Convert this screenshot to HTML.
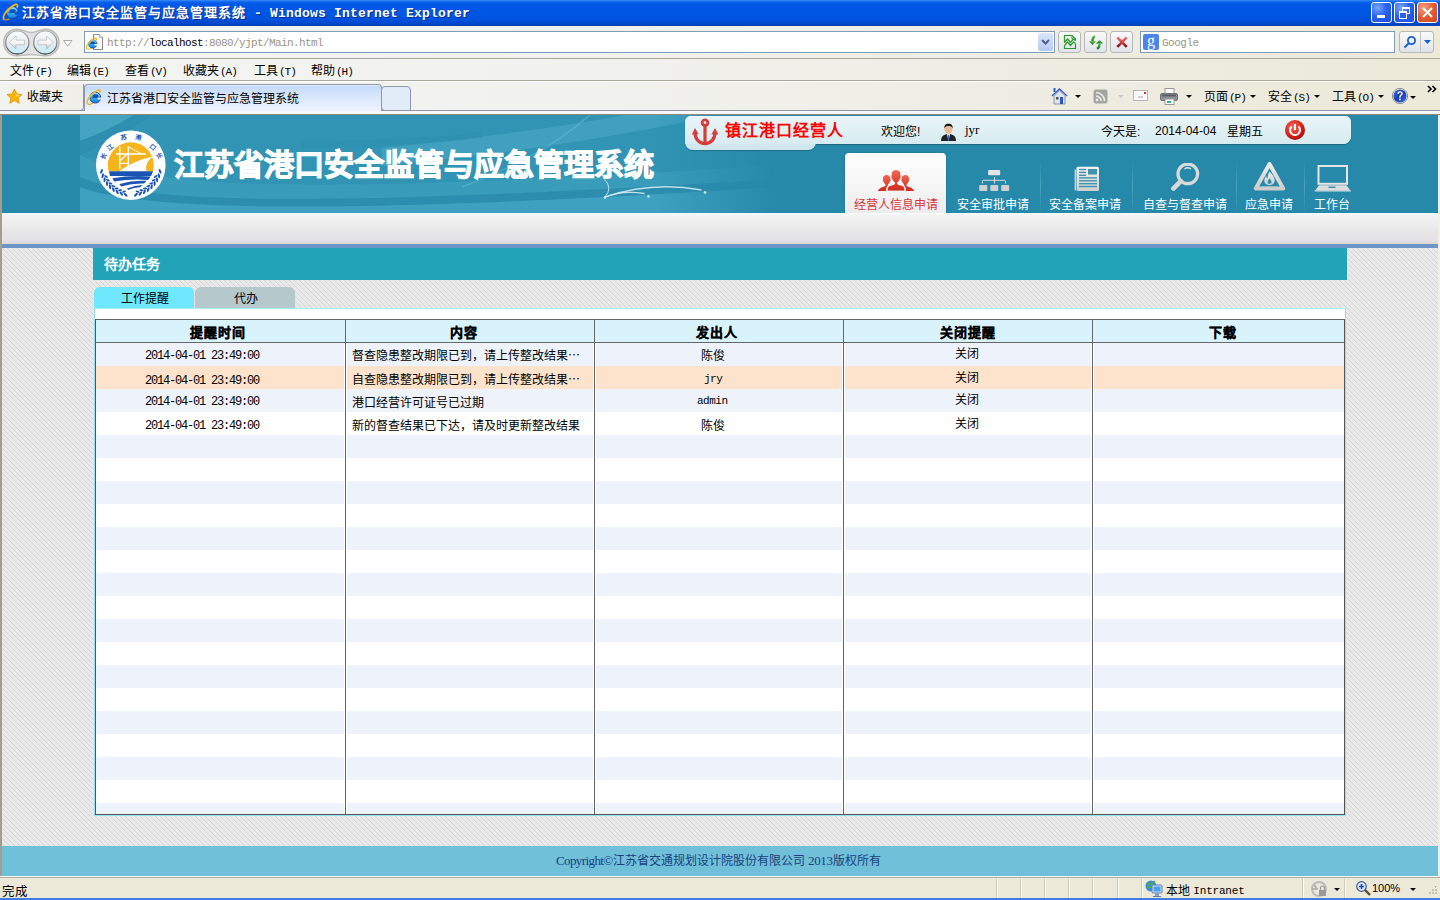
<!DOCTYPE html>
<html lang="zh-CN"><head><meta charset="utf-8">
<style>
*{margin:0;padding:0;box-sizing:border-box}
html,body{width:1440px;height:900px;overflow:hidden;background:#ece9d8;font-family:"Liberation Sans",sans-serif;font-size:12px;color:#000}
.a{position:absolute}
.nw{white-space:nowrap}
#title{left:0;top:0;width:1440px;height:26px;background:linear-gradient(#3a8cf6 0,#0b63ec 2px,#0058e6 4px,#0056e4 14px,#0050dc 20px,#0047c9 24px,#0a3fb0 26px)}
#title .t{left:22px;top:2px;color:#fff;font-weight:bold;font-size:13px;text-shadow:1px 1px 0 #0a2a8a}
.wbtn{top:2px;width:21px;height:21px;border:1px solid #fff;border-radius:3px;background:radial-gradient(circle at 30% 25%,#7aa8ff 0,#2a62ee 45%,#1d4fe0 100%)}
.chrome{background:linear-gradient(90deg,#f4f4f2 0,#f1f1ee 600px,#ece9d8 1440px)}
#addr{left:0;top:26px;width:1440px;height:32px}
#menu{left:0;top:58px;width:1440px;height:23px;border-top:1px solid #a9a797;border-bottom:1px solid #a9a797}
#favs{left:0;top:81px;width:1440px;height:33px;border-top:1px solid #fff}
.ibox{background:#fff;border:1px solid #7f9db9}
.tbtn{top:31px;width:23px;height:22px;border:1px solid #b7b7b7;border-radius:3px;background:linear-gradient(#fafafa 0,#eceef2 50%,#dfe3ea 100%)}
.menuitem{top:61px;font-size:12px}
.pm{font-family:"Liberation Mono",monospace;font-size:11px;margin-left:1px;letter-spacing:-1px}
.tb{top:87px;font-size:12px}
.arr{width:0;height:0;border-left:3px solid transparent;border-right:3px solid transparent;border-top:3px solid #000}
#page{left:0;top:114px;width:1440px;height:764px;background:linear-gradient(90deg,#a19e8f 0,#a19e8f 2px,#f1efe6 2px)}
#banner{left:2px;top:115px;width:1436px;height:98px;background:#2689aa;overflow:hidden}
#graybar{left:2px;top:213px;width:1436px;height:31px;background:linear-gradient(#fff 0,#f3f3f3 2px,#ececec 12px,#e4e4e4 22px,#e4e2e8 27px,#ddd7d6 30px)}
#blueline{left:2px;top:244px;width:1436px;height:4px;background:linear-gradient(#7097c9,#6b93c6)}
#body{left:2px;top:248px;width:1436px;height:598px}
#footer{left:2px;top:846px;width:1436px;height:30px;background:#6fc0d8;color:#1a4080;font-size:12px}
#status{left:0;top:876px;width:1440px;height:24px;background:#ece9d8;border-top:1px solid #fff}
.ph{left:93px;top:248px;width:1254px;height:32px;background:#22a3b8;color:#fff;font-weight:bold;font-size:14px}
.tab{top:287px;height:22px;border-radius:6px 6px 0 0;font-size:12px;text-align:center;line-height:24px;padding-left:2px}
.hd{font-weight:bold;font-size:13px;letter-spacing:1px;-webkit-text-stroke:.3px #000}
.dt{font-family:"Liberation Mono",monospace;font-size:12px;letter-spacing:-1.2px}
.mo{font-family:"Liberation Mono",monospace;font-size:11px;letter-spacing:-0.5px}
</style></head><body>
<svg width="0" height="0" style="position:absolute"><defs>
<linearGradient id="ieg" x1="0" y1="0" x2="0" y2="1"><stop offset="0" stop-color="#9ae6ff"/><stop offset=".5" stop-color="#37b0f0"/><stop offset="1" stop-color="#1878d8"/></linearGradient>
<mask id="iem"><rect width="24" height="24" fill="#fff"/><rect x="14.8" y="12.6" width="5" height="2.2" fill="#000"/></mask>
<symbol id="ie" viewBox="0 0 24 24">
 <g mask="url(#iem)"><circle cx="12.3" cy="12.6" r="6" fill="url(#ieg)" stroke="#0b3f96" stroke-width=".9"/>
 <ellipse cx="12.6" cy="10.6" rx="3.2" ry="1.6" fill="#0a52d0"/>
 <rect x="8.6" y="11.7" width="9.4" height="1.1" fill="#0b3f96"/></g>
 <path d="M4.2 19.6C1.8 17.8 5 11.5 10.5 7.5S17 3.8 17.5 5.2c.4 1-.3 1.9-.8 2.4" fill="none" stroke="#f6b81a" stroke-width="1.7"/>
 <path d="M4.2 19.6c1.2.8 3.5.2 5.5-.8" fill="none" stroke="#e6a010" stroke-width="1.2"/>
</symbol></defs></svg>
<!-- title bar -->
<div id="title" class="a">
 <svg class="a" style="left:0;top:0" width="24" height="24"><use href="#ie"/></svg>
 <div class="t a nw"><span style="letter-spacing:1px">江苏省港口安全监管与应急管理系统</span><span style="font-family:'Liberation Mono',monospace;letter-spacing:0.2px"> - Windows Internet Explorer</span></div>
 <div class="wbtn a" style="left:1371px"><div class="a" style="left:5px;top:12px;width:8px;height:3px;background:#fff"></div></div>
 <div class="wbtn a" style="left:1394px"><div class="a" style="left:7px;top:4px;width:8px;height:7px;border:1px solid #fff;border-top-width:2px"></div><div class="a" style="left:4px;top:8px;width:8px;height:8px;border:1px solid #fff;border-top-width:2px;background:#2a62ee"></div></div>
 <div class="wbtn a" style="left:1417px;background:radial-gradient(circle at 30% 25%,#f7a081 0,#e25c34 50%,#d0471e 100%)">
  <svg class="a" style="left:4px;top:4px" width="11" height="11"><path d="M1 1L10 10M10 1L1 10" stroke="#fff" stroke-width="2"/></svg>
 </div>
</div>
<!-- address row -->
<div id="addr" class="a chrome">
 <svg class="a" style="left:3px;top:2px" width="58" height="30" viewBox="0 0 58 30">
  <defs><linearGradient id="bg1" x1="0" y1="0" x2="0" y2="1"><stop offset="0" stop-color="#fdfdfd"/><stop offset="0.45" stop-color="#e8ecef"/><stop offset="1" stop-color="#c2ecfb"/></linearGradient>
  <linearGradient id="bst" x1="0" y1="0" x2="0" y2="1"><stop offset="0" stop-color="#b4b4b4"/><stop offset="0.6" stop-color="#8a8a8a"/><stop offset="1" stop-color="#4a4a4a"/></linearGradient>
  <linearGradient id="arw" x1="0" y1="0" x2="0" y2="1"><stop offset="0" stop-color="#fff"/><stop offset=".55" stop-color="#f4f4f4"/><stop offset="1" stop-color="#bdbdbd"/></linearGradient></defs>
  <path d="M14 1.2C20 1.2 23 4.5 28.3 4.5S36.5 1.2 42.5 1.2C50 1.2 56 7 56 14.5S50 27.8 42.5 27.8C36.5 27.8 34 26.5 28.3 26.5S20 27.8 14 27.8C6.5 27.8 .8 22 .8 14.5S6.5 1.2 14 1.2z" fill="#e2e2e2" stroke="#bcbcbc" stroke-width="1.4"/>
  <circle cx="14.3" cy="14.4" r="11.6" fill="url(#bg1)" stroke="url(#bst)" stroke-width="1.3"/>
  <circle cx="42.3" cy="14.4" r="11.6" fill="url(#bg1)" stroke="url(#bst)" stroke-width="1.3"/>
  <path d="M6.5 14.5L13 8v4.2h8.5v4.6H13V21z" fill="url(#arw)" stroke="#b0b0b0" stroke-width=".6"/>
  <path d="M50.1 14.5L43.6 8v4.2h-8.5v4.6h8.5V21z" fill="url(#arw)" stroke="#b0b0b0" stroke-width=".6"/>
 </svg>
 <svg class="a" style="left:63px;top:14px" width="10" height="7"><path d="M0.5 .5h8.5l-4.25 5.5z" fill="#fff" stroke="#aaa"/></svg>
 <div class="a ibox" style="left:84px;top:5px;width:971px;height:22px">
  <svg class="a" style="left:2px;top:1px" width="18" height="18" viewBox="0 0 18 18"><path d="M6.5 1.5h6l3 3v12h-9z" fill="#fafafa" stroke="#8a8a8a"/><path d="M12.5 1.5v3h3" fill="#fff" stroke="#aaa" stroke-width=".8"/></svg><svg class="a" style="left:-1px;top:3px" width="17" height="17"><use href="#ie"/></svg>
  <div class="a nw" style="left:22px;top:5px;font-family:'Liberation Mono',monospace;font-size:11px;color:#9a9584;letter-spacing:-0.6px">http://<span style="color:#000">localhost</span>:8080/yjpt/Main.html</div>
  <div class="a" style="left:953px;top:1px;width:15px;height:18px;border-radius:2px;background:linear-gradient(#dbe5fb,#b5c9f2)"><svg class="a" style="left:3px;top:6px" width="9" height="6"><path d="M1 1l3.5 3.5L8 1" fill="none" stroke="#4d6185" stroke-width="2"/></svg></div>
 </div>
 <div class="a tbtn" style="left:1058px;top:5px"><svg class="a" style="left:3px;top:2px" width="16" height="16"><g fill="none" stroke="#2a9a2a" stroke-width="1.2"><path d="M2.5 8.5V1.5H10L13.5 5V6.5"/><path d="M10 1.5V5h3.5" stroke-width=".9"/><path d="M2.5 11.5V14.5H13.5V9.5"/><path d="M2.5 8.5L5.5 5 8.5 8.5 11.5 5 13.5 6.5M2.5 11.5L5.5 8 8.5 11.5 11.5 8 13.5 9.5"/></g></svg></div>
 <div class="a tbtn" style="left:1084px;top:5px"><svg class="a" style="left:3px;top:3px" width="17" height="16"><defs><linearGradient id="gr" x1="0" y1="0" x2="0" y2="1"><stop offset="0" stop-color="#5ab84a"/><stop offset="1" stop-color="#1a7a1a"/></linearGradient></defs><path d="M7 1.2C5.2 2 4.3 4 4.4 6.5" fill="none" stroke="url(#gr)" stroke-width="2.2"/><path d="M.8 6.2H8.2L4.4 10z" fill="url(#gr)"/><path d="M7.8 8.6H15.2L11.6 5z" fill="url(#gr)"/><path d="M11.5 8.4C11.8 11 11 12.8 9 13.8" fill="none" stroke="url(#gr)" stroke-width="2.2"/></svg></div>
 <div class="a tbtn" style="left:1110px;top:5px"><svg class="a" style="left:5px;top:3px" width="13" height="14"><defs><linearGradient id="rx" x1="0" y1="0" x2="0" y2="1"><stop offset="0" stop-color="#f07070"/><stop offset=".5" stop-color="#d04848"/><stop offset="1" stop-color="#800a0a"/></linearGradient></defs><path d="M1.3 2.3L10.7 11.8M10.7 2.3L1.3 11.8" stroke="url(#rx)" stroke-width="2.6"/></svg></div>
 <div class="a ibox" style="left:1140px;top:5px;width:255px;height:22px">
  <div class="a" style="left:2px;top:2px;width:16px;height:16px;border-radius:2px;background:#4a86e8;color:#fff;font-family:'Liberation Serif',serif;font-size:16px;line-height:13px;text-align:center">g</div>
  <div class="a nw" style="left:21px;top:5px;font-family:'Liberation Mono',monospace;font-size:11px;color:#9a9584;letter-spacing:-0.5px">Google</div>
 </div>
 <div class="a" style="left:1399px;top:5px;width:35px;height:22px;border:1px solid #b9b9b9;border-radius:3px;background:linear-gradient(#fafafa 0,#eceef2 50%,#dfe3ea 100%)">
  <div class="a" style="left:20px;top:0;width:1px;height:20px;background:#c0c0c0"></div>
  <svg class="a" style="left:3px;top:3px" width="14" height="14"><circle cx="8.5" cy="5.5" r="3.6" fill="none" stroke="#1c5fd0" stroke-width="1.8"/><path d="M6 8L1.5 12.5" stroke="#1c5fd0" stroke-width="2"/></svg>
  <svg class="a" style="left:24px;top:8px" width="8" height="5"><path d="M0 0h7L3.5 4z" fill="#1c5fd0"/></svg>
 </div>
</div>
<!-- menu -->
<div id="menu" class="a chrome"></div>
<div class="a menuitem nw" style="left:10px">文件<span class="pm">(F)</span></div>
<div class="a menuitem nw" style="left:67px">编辑<span class="pm">(E)</span></div>
<div class="a menuitem nw" style="left:125px">查看<span class="pm">(V)</span></div>
<div class="a menuitem nw" style="left:183px">收藏夹<span class="pm">(A)</span></div>
<div class="a menuitem nw" style="left:254px">工具<span class="pm">(T)</span></div>
<div class="a menuitem nw" style="left:311px">帮助<span class="pm">(H)</span></div>
<!-- favorites/tab bar -->
<div id="favs" class="a chrome"></div>
<div class="a" style="left:0;top:110px;width:1440px;height:1px;background:#8f97ad"></div>
<div class="a" style="left:0;top:111px;width:1440px;height:3px;background:#f7f7fb"></div>
<div class="a" style="left:-5px;top:84px;width:89px;height:27px;border:1px solid #8f97ad;border-top:none;border-left:none;border-radius:0 0 4px 0;background:linear-gradient(90deg,#f3f3f1,#efeee8)"></div>
<svg class="a" style="left:6px;top:88px" width="17" height="17" viewBox="0 0 17 17"><path d="M8.5 1l2.3 4.9 5.2.6-3.9 3.6 1.1 5.2-4.7-2.7-4.7 2.7 1.1-5.2L1 6.5l5.2-.6z" fill="#f7b500" stroke="#e09000" stroke-width=".8"/><path d="M8.5 3l1.5 3.6 3.5.5-3 2" fill="#ffe780"/></svg>
<div class="a tb nw" style="left:27px">收藏夹</div>
<div class="a" style="left:84px;top:84px;width:298px;height:27px;border:1px solid #8f97ad;border-bottom:none;border-radius:4px 4px 0 0;background:linear-gradient(#fff 0,#c3dafb 1px,#d6e5fb 10px,#eef3fc 26px)"></div>
<svg class="a" style="left:84px;top:86px" width="22" height="22"><use href="#ie"/></svg>
<div class="a nw" style="left:107px;top:89px">江苏省港口安全监管与应急管理系统</div>
<div class="a" style="left:381px;top:86px;width:30px;height:25px;border:1px solid #8f97ad;border-radius:4px 4px 0 4px;background:#e2ebf8"></div>
<!-- right toolbar -->
<svg class="a" style="left:1050px;top:87px" width="19" height="18" viewBox="0 0 19 18"><path d="M2 9L9.5 2 17 9" fill="none" stroke="#3a5fc8" stroke-width="1.5"/><path d="M4 8.5v8.5h11V8.5L9.5 3.5z" fill="#dfe4ea" stroke="#8a96a8"/><rect x="10" y="10" width="3" height="7" fill="#2a58b8"/><rect x="6" y="10" width="2.5" height="2.5" fill="#555"/><rect x="3.5" y="1" width="2" height="4" fill="#3a5fc8"/></svg>
<div class="a arr" style="left:1075px;top:95px"></div>
<svg class="a" style="left:1093px;top:89px" width="15" height="15"><rect x=".5" y=".5" width="14" height="14" rx="2.5" fill="#a5a5a0"/><circle cx="4" cy="11" r="1.4" fill="#eee"/><path d="M3 7a5 5 0 0 1 5 5M3 3.5a8.5 8.5 0 0 1 8.5 8.5" fill="none" stroke="#eee" stroke-width="1.6"/></svg>
<div class="a arr" style="left:1118px;top:95px;border-top-color:#c8c8c8"></div>
<svg class="a" style="left:1133px;top:90px" width="16" height="12"><rect x=".5" y=".5" width="14" height="10" fill="#f8f8f8" stroke="#b5b5b5"/><path d="M5 7h5" stroke="#aaa"/><rect x="11" y="2" width="2" height="2" fill="#e03030"/></svg>
<svg class="a" style="left:1160px;top:88px" width="19" height="17"><rect x="5" y=".5" width="9" height="6" fill="#fff" stroke="#999"/><rect x=".5" y="5.5" width="17" height="7" rx="1.5" fill="#8d9098" stroke="#6e7178"/><rect x="2" y="6.5" width="14" height="2" fill="#5a5d63"/><rect x="5" y="11" width="9" height="5.5" fill="#fff" stroke="#999"/><rect x="7" y="13" width="4" height="2" fill="#3a9"/></svg>
<div class="a arr" style="left:1186px;top:95px"></div>
<div class="a tb nw" style="left:1204px">页面<span class="pm">(P)</span></div><div class="a arr" style="left:1250px;top:95px"></div>
<div class="a tb nw" style="left:1268px">安全<span class="pm">(S)</span></div><div class="a arr" style="left:1314px;top:95px"></div>
<div class="a tb nw" style="left:1332px">工具<span class="pm">(O)</span></div><div class="a arr" style="left:1378px;top:95px"></div>
<svg class="a" style="left:1391px;top:87px" width="18" height="18" viewBox="0 0 18 18"><defs><linearGradient id="hg" x1="0" y1="0" x2="1" y2="1"><stop offset="0" stop-color="#3a6ee0"/><stop offset=".5" stop-color="#1a3ea8"/><stop offset="1" stop-color="#3a6ae8"/></linearGradient></defs><circle cx="9" cy="9" r="7.6" fill="#fff" stroke="#8a8a8a" stroke-width="1"/><circle cx="9" cy="9" r="6.6" fill="url(#hg)"/><path d="M6.3 6.8C6.3 5 7.5 4.2 9.1 4.2S11.8 5.1 11.8 6.6c0 1.6-2 2-2.2 3.5v.6H8.2v-.8c.1-1.8 2-2.2 2-3.3 0-.7-.5-1-1.1-1-.7 0-1.1.4-1.1 1.2z" fill="#fff"/><rect x="8.1" y="11.6" width="1.6" height="1.6" fill="#fff"/></svg>
<div class="a arr" style="left:1410px;top:96px"></div>
<svg class="a" style="left:1427px;top:85px" width="11" height="8"><path d="M1 1l3 3-3 3M5.5 1l3 3-3 3" fill="none" stroke="#000" stroke-width="1.6"/></svg>

<!-- page -->
<div id="page" class="a"></div>
<div class="a" style="left:0;top:114px;width:1440px;height:1px;background:#8d897b"></div>
<div id="banner" class="a">
 <svg class="a" style="left:0;top:0" width="1436" height="98" viewBox="0 0 1436 98">
  <defs>
   <linearGradient id="fadeR" x1="0" y1="0" x2="1" y2="0"><stop offset="0" stop-color="#fff"/><stop offset=".82" stop-color="#fff"/><stop offset="1" stop-color="#000"/></linearGradient>
   <mask id="bmask"><rect x="78" y="0" width="700" height="98" fill="url(#fadeR)"/></mask>
  </defs>
  <g mask="url(#bmask)">
   <rect x="78" y="0" width="700" height="98" fill="#3194b4"/>
   <path d="M78 0H132C112 12 95 20 78 26z" fill="#45a4c2"/>
   <path d="M78 26C95 20 112 12 132 0H150C120 20 100 30 78 40z" fill="#2e8fb0"/>
   <path d="M78 40C150 75 320 80 778 50V64C330 92 140 90 78 62z" fill="#3a9cbb"/>
   <path d="M78 62C140 90 330 92 778 64V72C330 100 140 96 78 72z" fill="#2d8daf"/>
   <path d="M78 72C140 96 330 100 778 72V98H78z" fill="#3fa1c0"/>
   <path d="M460 72C520 50 560 25 590 -2" fill="none" stroke="#7ccbe2" stroke-opacity=".35" stroke-width="1.5"/>
   <path d="M380 42C480 32 600 16 700 -6" fill="none" stroke="#6cc2dc" stroke-opacity=".28" stroke-width="18"/>
   <path d="M300 30C380 28 430 26 480 20" fill="none" stroke="#2c8aab" stroke-opacity=".3" stroke-width="6"/>
  </g>
  <g fill="none" stroke="#d8eef5" stroke-opacity=".85">
   <path d="M603 82Q611 73 602.5 64.5" stroke-width="1"/>
   <path d="M603 82Q620 75 642.5 78.5" stroke-width="1.3"/>
   <path d="M603 82Q650 66 699.5 75" stroke-width="1.3"/>
  </g>
  <g fill="#d8eef5" fill-opacity=".85"><circle cx="603" cy="82.4" r="1.3"/><circle cx="646.5" cy="81.4" r="1.3"/><circle cx="703" cy="77.4" r="1.3"/></g>
 </svg>
 <svg class="a" style="left:93px;top:15px" width="72" height="72" viewBox="0 0 72 72">
  <defs><clipPath id="sunclip"><rect x="0" y="0" width="72" height="41.3"/></clipPath></defs>
  <circle cx="35.8" cy="35.2" r="34.8" fill="#fff"/>
  <circle cx="35.8" cy="35.2" r="23" fill="#f5b41c" clip-path="url(#sunclip)"/>
  <g stroke="#fff" stroke-width="1.3" fill="none"><path d="M24.8 16.8V39M33.3 16.8V39M21 24H51M24.8 33.3H33.3M24.8 31L33.3 23"/><path d="M33.3 16.8L47 24" stroke-width=".9"/></g>
  <path d="M24 41.3Q40 30 58 26.5Q49 33 51.5 41.3z" fill="#fff"/>
  <path d="M14 41.3H58Q57 44 56 46H15Q14.5 44 14 41.3z" fill="#1a55b5"/>
  <path d="M17.5 48.2Q36 45 55.5 46.5Q54.5 48.5 53 50Q36 48.5 19 51.5z" fill="#1a55b5"/>
  <path d="M24.5 54Q38 50 51.5 50.8Q50.5 52.5 49 53.5Q38 53 26 56.5z" fill="#1a55b5"/>
  <path d="M32 58.5Q40 55 47.8 55Q46.5 56.6 45 57.2Q39 57.5 33 60z" fill="#1a55b5"/>
  <g fill="#1a55b5"><ellipse cx="6.5" cy="41.4" rx="2.5" ry="1.1" transform="rotate(293 6.5 41.4)"/><ellipse cx="7.7" cy="45.7" rx="2.5" ry="1.1" transform="rotate(284 7.7 45.7)"/><ellipse cx="11.0" cy="46.5" rx="2.1" ry=".95" transform="rotate(214 11.0 46.5)"/><ellipse cx="9.6" cy="49.7" rx="2.5" ry="1.1" transform="rotate(276 9.6 49.7)"/><ellipse cx="12.9" cy="50.1" rx="2.1" ry=".95" transform="rotate(206 12.9 50.1)"/><ellipse cx="12.0" cy="53.5" rx="2.5" ry="1.1" transform="rotate(268 12.0 53.5)"/><ellipse cx="15.4" cy="53.3" rx="2.1" ry=".95" transform="rotate(198 15.4 53.3)"/><ellipse cx="15.0" cy="56.8" rx="2.5" ry="1.1" transform="rotate(259 15.0 56.8)"/><ellipse cx="18.3" cy="56.1" rx="2.1" ry=".95" transform="rotate(189 18.3 56.1)"/><ellipse cx="18.4" cy="59.6" rx="2.5" ry="1.1" transform="rotate(250 18.4 59.6)"/><ellipse cx="21.5" cy="58.5" rx="2.1" ry=".95" transform="rotate(180 21.5 58.5)"/><ellipse cx="22.2" cy="61.9" rx="2.5" ry="1.1" transform="rotate(242 22.2 61.9)"/><ellipse cx="25.1" cy="60.3" rx="2.1" ry=".95" transform="rotate(172 25.1 60.3)"/><ellipse cx="26.3" cy="63.6" rx="2.5" ry="1.1" transform="rotate(234 26.3 63.6)"/><ellipse cx="29.0" cy="61.6" rx="2.1" ry=".95" transform="rotate(164 29.0 61.6)"/><ellipse cx="30.6" cy="64.7" rx="2.5" ry="1.1" transform="rotate(225 30.6 64.7)"/><ellipse cx="65.1" cy="41.4" rx="2.5" ry="1.1" transform="rotate(-113 65.1 41.4)"/><ellipse cx="63.9" cy="45.7" rx="2.5" ry="1.1" transform="rotate(-104 63.9 45.7)"/><ellipse cx="60.6" cy="46.5" rx="2.1" ry=".95" transform="rotate(-34 60.6 46.5)"/><ellipse cx="62.0" cy="49.7" rx="2.5" ry="1.1" transform="rotate(-96 62.0 49.7)"/><ellipse cx="58.7" cy="50.1" rx="2.1" ry=".95" transform="rotate(-26 58.7 50.1)"/><ellipse cx="59.6" cy="53.5" rx="2.5" ry="1.1" transform="rotate(-88 59.6 53.5)"/><ellipse cx="56.2" cy="53.3" rx="2.1" ry=".95" transform="rotate(-18 56.2 53.3)"/><ellipse cx="56.6" cy="56.8" rx="2.5" ry="1.1" transform="rotate(-79 56.6 56.8)"/><ellipse cx="53.3" cy="56.1" rx="2.1" ry=".95" transform="rotate(-9 53.3 56.1)"/><ellipse cx="53.2" cy="59.6" rx="2.5" ry="1.1" transform="rotate(-70 53.2 59.6)"/><ellipse cx="50.1" cy="58.5" rx="2.1" ry=".95" transform="rotate(-0 50.1 58.5)"/><ellipse cx="49.4" cy="61.9" rx="2.5" ry="1.1" transform="rotate(-62 49.4 61.9)"/><ellipse cx="46.5" cy="60.3" rx="2.1" ry=".95" transform="rotate(8 46.5 60.3)"/><ellipse cx="45.3" cy="63.6" rx="2.5" ry="1.1" transform="rotate(-54 45.3 63.6)"/><ellipse cx="42.6" cy="61.6" rx="2.1" ry=".95" transform="rotate(16 42.6 61.6)"/><ellipse cx="41.0" cy="64.7" rx="2.5" ry="1.1" transform="rotate(-45 41.0 64.7)"/></g>
  <g font-size="6.2" font-weight="bold" fill="#1a55b5" font-family="Liberation Sans"><text x="8" y="28.2" transform="rotate(-62 8 25.7)" text-anchor="middle">长</text><text x="15" y="19.3" transform="rotate(-38 15 16.8)" text-anchor="middle">江</text><text x="28.2" y="10.0" transform="rotate(-10 28.2 7.5)" text-anchor="middle">苏</text><text x="43.4" y="10.0" transform="rotate(10 43.4 7.5)" text-anchor="middle">港</text><text x="57.8" y="19.3" transform="rotate(38 57.8 16.8)" text-anchor="middle">口</text><text x="64.5" y="28.2" transform="rotate(62 64.5 25.7)" text-anchor="middle">长</text></g>
 </svg>
 <div class="a nw" style="left:172px;top:33px;color:#fff;font-weight:bold;font-size:30px;letter-spacing:0px;line-height:34px;-webkit-text-stroke:1.2px #fff">江苏省港口安全监管与应急管理系统</div>
 <!-- user bar -->
 <div class="a" style="left:683px;top:1px;width:666px;height:28px;border-radius:6px 6px 8px 0;background:linear-gradient(#e9f5f8,#d5eaf0);box-shadow:0 1px 1px rgba(0,0,0,.25)"></div>
 <div class="a" style="left:683px;top:20px;width:131px;height:15px;border-radius:0 0 8px 8px;background:linear-gradient(#d9ecf1,#cfe5eb);box-shadow:0 1px 1px rgba(0,0,0,.2)"></div>
 <div class="a" style="left:683px;top:1px;width:666px;height:28px;border-radius:6px 6px 8px 0;background:linear-gradient(#e9f5f8,#d6ebf0)"></div>
 <svg class="a" style="left:690px;top:3px" width="28" height="28" viewBox="0 0 28 28">
  <circle cx="13" cy="4.8" r="4.3" fill="#d63c3c"/><circle cx="13" cy="4.6" r="1.4" fill="#e6f3f7"/>
  <rect x="11.4" y="8" width="3.2" height="17.5" fill="#d63c3c"/>
  <path d="M3 14.5C3 21.5 7.5 25.6 13 25.6S23 21.5 23 14.5" fill="none" stroke="#d63c3c" stroke-width="3.2"/>
  <path d="M-.3 16.5L3 10l3.6 6.2z M19.4 16.5L23 10l3.3 6.5z" fill="#d63c3c"/>
 </svg>
 <div class="a nw" style="left:723px;top:2px;color:#f00;font-weight:bold;font-size:16px;letter-spacing:1px;font-family:'Liberation Serif',serif">镇江港口经营人</div>
 <div class="a nw" style="left:879px;top:7px;font-size:12px">欢迎您!</div>
 <svg class="a" style="left:938px;top:8px" width="17" height="18" viewBox="0 0 17 18">
  <path d="M1 18c0-5 3-7 7.5-7S16 13 16 18z" fill="#222"/>
  <path d="M7 11l1.5 7 1.5-7z" fill="#fff"/><path d="M8 12h1l.3 5-.8 1-.8-1z" fill="#2a6ad0"/>
  <ellipse cx="8.5" cy="6" rx="4" ry="4.8" fill="#e8b890"/>
  <path d="M4.3 5.5C4 2 6 .8 8.5.8S13 2 12.7 5.5C12 3.5 10.5 3 8.5 3S5 3.5 4.3 5.5z" fill="#1a1a1a"/>
 </svg>
 <div class="a nw" style="left:963px;top:7px;font-size:13px;font-family:'Liberation Serif',serif">jyr</div>
 <div class="a nw" style="left:1099px;top:7px;font-size:12px">今天是:</div>
 <div class="a nw" style="left:1153px;top:9px;font-size:12px">2014-04-04</div>
 <div class="a nw" style="left:1225px;top:7px;font-size:12px">星期五</div>
 <svg class="a" style="left:1282px;top:4px" width="22" height="22" viewBox="0 0 22 22">
  <defs><radialGradient id="pw" cx="40%" cy="35%" r="65%"><stop offset="0" stop-color="#ff6a5a"/><stop offset=".7" stop-color="#d8201a"/><stop offset="1" stop-color="#a81010"/></radialGradient></defs>
  <circle cx="11" cy="11" r="10" fill="url(#pw)"/>
  <path d="M7.5 7.5a5 5 0 1 0 7 0" fill="none" stroke="#fff" stroke-width="2"/>
  <path d="M11 5v6" stroke="#fff" stroke-width="2"/>
 </svg>
 <!-- nav -->
 <div class="a" style="left:843px;top:38px;width:101px;height:60px;border-radius:4px 4px 0 0;background:linear-gradient(#fff 0,#f6f6f6 30px,#ececec 60px);box-shadow:0 0 2px rgba(0,0,0,.3)"></div>
 <svg class="a" style="left:874px;top:54px" width="40" height="23" viewBox="0 0 40 23">
  <defs><linearGradient id="rd" x1="0" y1="0" x2="0" y2="1"><stop offset="0" stop-color="#f26652"/><stop offset="1" stop-color="#cf2a1e"/></linearGradient></defs>
  <g id="sp"><path d="M10.4 6C8.2 6 7.1 7.3 7.1 9.6c0 .9-.4 1.2-.2 2 .2.7.5.9.7 1.4.4 1.1 1 1.8 1.8 2.3v1.6c-1.2.6-2.5.8-3.6 1.3C4 19.1 2.3 20.6 1.8 22.1H10c0-2.6.5-4.2 1.5-5.4l.6-.6v-1c.8-.5 1.4-1.2 1.8-2.3.2-.5.5-.7.7-1.4.2-.8-.2-1.1-.2-2C14.4 7.3 12.6 6 10.4 6z" fill="url(#rd)"/></g>
  <use href="#sp" transform="translate(40,0) scale(-1,1)"/>
  <path d="M20 .7C17 .7 15.3 2.2 15.3 5.5c0 1.3-.6 1.6-.3 2.8.3 1 .8 1.2 1 2 .5 1.5 1.5 2.6 2.5 3.2V15c-1.5.8-3.5 1-5 1.7-1.6.8-2.4 2.8-2.4 5.4H29c0-2.6-.8-4.6-2.4-5.4-1.5-.7-3.5-.9-5-1.7v-1.5c1-.6 2-1.7 2.5-3.2.2-.8.7-1 1-2 .3-1.2-.3-1.5-.3-2.8C24.7 2.2 23 .7 20 .7z" fill="url(#rd)" stroke="#f6f6f6" stroke-width="1"/>
 </svg>
 <div class="a nw" style="left:852px;top:80px;color:#d8363a;font-size:12px">经营人信息申请</div>
 <svg class="a" style="left:977px;top:54px" width="33" height="23" viewBox="0 0 33 23">
  <rect x="9.1" y=".9" width="12.1" height="5.3" rx="1" fill="#e4e4e4"/>
  <path d="M15.5 8V14.5M3.5 14.5V12.3Q3.5 11.3 4.5 11.3H25.5Q26.5 11.3 26.5 12.3V14.5" stroke="#d8d8d8" stroke-width="1" fill="none"/>
  <rect x=".2" y="16.1" width="8.1" height="5.8" rx="1" fill="#d0d0d0"/><rect x="11.3" y="16.1" width="7.9" height="5.8" rx="1" fill="#d0d0d0"/><rect x="22.2" y="16.1" width="8" height="5.8" rx="1" fill="#d0d0d0"/>
 </svg>
 <div class="a nw" style="left:955px;top:80px;color:#fff;font-size:12px">安全审批申请</div>
 <div class="a" style="left:1038px;top:45px;width:1px;height:53px;background:linear-gradient(#2689aa,#4aa3c0 50%,#2689aa)"></div>
 <svg class="a" style="left:1072px;top:51px" width="26" height="26" viewBox="0 0 26 26">
  <defs><linearGradient id="pg" x1="0" y1="0" x2="0" y2="1"><stop offset="0" stop-color="#f2f2f2"/><stop offset="1" stop-color="#cfcfcf"/></linearGradient></defs>
  <rect x="2.5" y=".7" width="22.5" height="24.3" rx="1.5" fill="url(#pg)"/>
  <rect x=".6" y="3.5" width="1.4" height="21" fill="#d0d0d0"/>
  <g fill="#3d93ae"><rect x="5" y="2.8" width="7" height="1.4"/><rect x="5" y="5.7" width="7" height="1.4"/><rect x="5" y="8.6" width="7" height="1.4"/>
  <rect x="14" y="3" width="9" height="5.5"/>
  <rect x="5" y="11.2" width="18" height="1.4"/><rect x="5" y="14.1" width="18" height="1.4"/><rect x="5" y="17" width="18" height="1.4"/><rect x="5" y="19.8" width="18" height="1.4"/></g>
 </svg>
 <div class="a nw" style="left:1047px;top:80px;color:#fff;font-size:12px">安全备案申请</div>
 <div class="a" style="left:1130px;top:45px;width:1px;height:53px;background:linear-gradient(#2689aa,#4aa3c0 50%,#2689aa)"></div>
 <svg class="a" style="left:1169px;top:48px" width="32" height="30" viewBox="0 0 32 30">
  <circle cx="16.8" cy="10.9" r="9.8" fill="none" stroke="#dadada" stroke-width="3.2"/>
  <path d="M13.5 5.8Q16.8 3.8 20 5.8" stroke="#e0e0e0" stroke-width="1.4" fill="none"/>
  <path d="M9.8 18.2L2.5 25.5" stroke="#d8d8d8" stroke-width="4.6" stroke-linecap="round"/>
 </svg>
 <div class="a nw" style="left:1141px;top:80px;color:#fff;font-size:12px">自查与督查申请</div>
 <div class="a" style="left:1234px;top:45px;width:1px;height:53px;background:linear-gradient(#2689aa,#4aa3c0 50%,#2689aa)"></div>
 <svg class="a" style="left:1250px;top:46px" width="36" height="32" viewBox="0 0 36 32">
  <defs><linearGradient id="wg" x1="0" y1="0" x2="0" y2="1"><stop offset="0" stop-color="#ececec"/><stop offset="1" stop-color="#cdcdcd"/></linearGradient></defs>
  <path d="M17.5 3L3.8 27.4H31.2z" fill="none" stroke="url(#wg)" stroke-width="4" stroke-linejoin="round"/>
  <path d="M17.5 10.5c2.6 3 5.2 5.5 5.2 9 0 3-2.3 4.7-5.2 4.7s-5.2-1.7-5.2-4.7c0-2 1-3.5 2-4.6 0 1.5.6 2.4 1.4 2.7-.3-2.6.5-4.6 1.8-7.1z" fill="url(#wg)"/>
  <path d="M17.5 17.5c1 1.2 2 2.2 2 3.5 0 1.3-.9 2-2 2s-2-.7-2-2c0-1.2 1-2.2 2-3.5z" fill="#2f8cab"/>
  <rect x="9.5" y="25" width="16" height="1" fill="#9cc6d2" opacity=".7"/>
 </svg>
 <div class="a nw" style="left:1243px;top:80px;color:#fff;font-size:12px">应急申请</div>
 <div class="a" style="left:1302px;top:45px;width:1px;height:53px;background:linear-gradient(#2689aa,#4aa3c0 50%,#2689aa)"></div>
 <svg class="a" style="left:1312px;top:50px" width="38" height="28" viewBox="0 0 38 28">
  <rect x="4.5" y="1" width="28.5" height="17.8" fill="none" stroke="#e6e4e4" stroke-width="2"/>
  <path d="M5 20.2H32.5L37 26.6H.5z" fill="#dcdcdc"/>
  <rect x="14.5" y="21.6" width="7" height="1.4" fill="#3a90ac"/>
  <rect x=".5" y="25" width="36.5" height="1" fill="#aac9d3" opacity=".6"/>
 </svg>
 <div class="a nw" style="left:1312px;top:80px;color:#fff;font-size:12px">工作台</div>
</div>
<div id="graybar" class="a"></div>
<div id="blueline" class="a"></div>
<svg id="body" class="a" width="1436" height="598">
 <defs><pattern id="st" width="5" height="5" patternUnits="userSpaceOnUse"><rect width="5" height="5" fill="#e9e9e9"/><rect x="0" y="0" width="1" height="1" fill="#d5d5d5"/><rect x="1" y="1" width="1" height="1" fill="#d5d5d5"/><rect x="2" y="2" width="1" height="1" fill="#d5d5d5"/><rect x="3" y="3" width="1" height="1" fill="#d5d5d5"/><rect x="4" y="4" width="1" height="1" fill="#d5d5d5"/></pattern></defs>
 <rect width="1436" height="598" fill="url(#st)" shape-rendering="crispEdges"/>
</svg>
<!--TABLE-->
<div class="a ph"><div class="a nw" style="left:11px;top:5px">待办任务</div></div>
<div class="a tab nw" style="left:94px;width:100px;background:#6fe8fd">工作提醒</div>
<div class="a tab nw" style="left:195px;width:100px;background:#b5c8cc">代办</div>
<div class="a" style="left:94px;top:308px;width:1252px;height:508px;background:#fff;border:1px solid #8fe2f2;border-top:1px solid #a8ecf8"></div>
<div class="a" style="left:95px;top:319px;width:1250px;height:496px;border:1px solid #555;border-top:1px solid #666;overflow:hidden;background:#fff">
<div class="a" style="left:0;top:0;width:1248px;height:23px;background:#d9f3fc;border-bottom:1px solid #666"></div>
<div class="a nw hd" style="left:94px;top:2px">提醒时间</div>
<div class="a nw hd" style="left:354px;top:2px">内容</div>
<div class="a nw hd" style="left:600px;top:2px">发出人</div>
<div class="a nw hd" style="left:844px;top:2px">关闭提醒</div>
<div class="a nw hd" style="left:1113px;top:2px">下载</div>
<div class="a" style="left:0;top:23px;width:1248px;height:23px;background:#eef2fa"></div>
<div class="a" style="left:0;top:46px;width:1248px;height:23px;background:#fde3cb"></div>
<div class="a" style="left:0;top:69px;width:1248px;height:23px;background:#eef2fa"></div>
<div class="a" style="left:0;top:92px;width:1248px;height:23px;background:#ffffff"></div>
<div class="a" style="left:0;top:115px;width:1248px;height:23px;background:#eef2fa"></div>
<div class="a" style="left:0;top:138px;width:1248px;height:23px;background:#ffffff"></div>
<div class="a" style="left:0;top:161px;width:1248px;height:23px;background:#eef2fa"></div>
<div class="a" style="left:0;top:184px;width:1248px;height:23px;background:#ffffff"></div>
<div class="a" style="left:0;top:207px;width:1248px;height:23px;background:#eef2fa"></div>
<div class="a" style="left:0;top:230px;width:1248px;height:23px;background:#ffffff"></div>
<div class="a" style="left:0;top:253px;width:1248px;height:23px;background:#eef2fa"></div>
<div class="a" style="left:0;top:276px;width:1248px;height:23px;background:#ffffff"></div>
<div class="a" style="left:0;top:299px;width:1248px;height:23px;background:#eef2fa"></div>
<div class="a" style="left:0;top:322px;width:1248px;height:23px;background:#ffffff"></div>
<div class="a" style="left:0;top:345px;width:1248px;height:23px;background:#eef2fa"></div>
<div class="a" style="left:0;top:368px;width:1248px;height:23px;background:#ffffff"></div>
<div class="a" style="left:0;top:391px;width:1248px;height:23px;background:#eef2fa"></div>
<div class="a" style="left:0;top:414px;width:1248px;height:23px;background:#ffffff"></div>
<div class="a" style="left:0;top:437px;width:1248px;height:23px;background:#eef2fa"></div>
<div class="a" style="left:0;top:460px;width:1248px;height:23px;background:#ffffff"></div>
<div class="a" style="left:0;top:483px;width:1248px;height:23px;background:#eef2fa"></div>
<div class="a nw dt" style="left:49px;top:29px">2014-04-01 23:49:00</div>
<div class="a nw" style="left:256px;top:26px">督查隐患整改期限已到，请上传整改结果⋯</div>
<div class="a nw" style="left:605px;top:26px">陈俊</div>
<div class="a nw" style="left:859px;top:24px">关闭</div>
<div class="a nw dt" style="left:49px;top:54px">2014-04-01 23:49:00</div>
<div class="a nw" style="left:256px;top:50px">自查隐患整改期限已到，请上传整改结果⋯</div>
<div class="a nw mo" style="left:608px;top:53px">jry</div>
<div class="a nw" style="left:859px;top:48px">关闭</div>
<div class="a nw dt" style="left:49px;top:75px">2014-04-01 23:49:00</div>
<div class="a nw" style="left:256px;top:73px">港口经营许可证号已过期</div>
<div class="a nw mo" style="left:601px;top:75px">admin</div>
<div class="a nw" style="left:859px;top:70px">关闭</div>
<div class="a nw dt" style="left:49px;top:99px">2014-04-01 23:49:00</div>
<div class="a nw" style="left:256px;top:96px">新的督查结果已下达，请及时更新整改结果</div>
<div class="a nw" style="left:605px;top:96px">陈俊</div>
<div class="a nw" style="left:859px;top:94px">关闭</div>
<div class="a" style="left:248px;top:23px;width:3px;height:473px;border-left:1px solid #fff;border-right:1px solid #fff;background:#666"></div><div class="a" style="left:249px;top:0;width:1px;height:23px;background:#666"></div>
<div class="a" style="left:497px;top:23px;width:3px;height:473px;border-left:1px solid #fff;border-right:1px solid #fff;background:#666"></div><div class="a" style="left:498px;top:0;width:1px;height:23px;background:#666"></div>
<div class="a" style="left:746px;top:23px;width:3px;height:473px;border-left:1px solid #fff;border-right:1px solid #fff;background:#666"></div><div class="a" style="left:747px;top:0;width:1px;height:23px;background:#666"></div>
<div class="a" style="left:995px;top:23px;width:3px;height:473px;border-left:1px solid #fff;border-right:1px solid #fff;background:#666"></div><div class="a" style="left:996px;top:0;width:1px;height:23px;background:#666"></div>
</div>
<!--/TABLE-->
<div id="footer" class="a"><div class="a nw" style="left:554px;top:5px"><span style="font-family:'Liberation Serif',serif;font-size:13px;letter-spacing:-0.6px">Copyright©</span>江苏省交通规划设计院股份有限公司 <span style="font-family:'Liberation Serif',serif;font-size:13px;letter-spacing:-0.3px">2013</span>版权所有</div></div>
<div id="status" class="a"></div>
<div class="a" style="left:0;top:877px;width:1440px;height:1px;background:#b0ad9e"></div>
<div class="a" style="left:0;top:898px;width:1440px;height:2px;background:#3c7fe0"></div>
<div class="a nw" style="left:2px;top:881px;font-size:12.5px">完成</div>
<div class="a" style="left:996px;top:879px;width:2px;height:19px;border-left:1px solid #c9c6b6;border-right:1px solid #fff"></div>
<div class="a" style="left:1020px;top:879px;width:2px;height:19px;border-left:1px solid #c9c6b6;border-right:1px solid #fff"></div>
<div class="a" style="left:1044px;top:879px;width:2px;height:19px;border-left:1px solid #c9c6b6;border-right:1px solid #fff"></div>
<div class="a" style="left:1068px;top:879px;width:2px;height:19px;border-left:1px solid #c9c6b6;border-right:1px solid #fff"></div>
<div class="a" style="left:1092px;top:879px;width:2px;height:19px;border-left:1px solid #c9c6b6;border-right:1px solid #fff"></div>
<div class="a" style="left:1117px;top:879px;width:2px;height:19px;border-left:1px solid #c9c6b6;border-right:1px solid #fff"></div>
<div class="a" style="left:1141px;top:879px;width:2px;height:19px;border-left:1px solid #c9c6b6;border-right:1px solid #fff"></div>
<div class="a" style="left:1302px;top:879px;width:2px;height:19px;border-left:1px solid #c9c6b6;border-right:1px solid #fff"></div>
<div class="a" style="left:1344px;top:879px;width:2px;height:19px;border-left:1px solid #c9c6b6;border-right:1px solid #fff"></div>
<svg class="a" style="left:1145px;top:880px" width="18" height="18" viewBox="0 0 18 18">
 <circle cx="6" cy="6" r="5.5" fill="#3a8ae0"/><path d="M2 4c2-1 3 1 5 0s1-3 3-2M1.5 7c2 1 4-1 6 1" stroke="#4ab04a" stroke-width="1.8" fill="none"/>
 <rect x="7" y="5" width="10" height="8" rx="1" fill="#cfe0f0" stroke="#5a7ab0"/><rect x="8.5" y="6.5" width="7" height="5" fill="#4aa0e8"/>
 <path d="M10 13h4v3h-4z" fill="#8aa0b8"/><path d="M8 16.5h8" stroke="#5a7ab0"/>
</svg>
<div class="a nw" style="left:1166px;top:881px">本地 <span style="font-family:'Liberation Mono',monospace;font-size:11px;letter-spacing:-0.2px;position:relative;top:-1px">Intranet</span></div>
<svg class="a" style="left:1310px;top:880px" width="18" height="18" viewBox="0 0 18 18">
 <circle cx="9" cy="9" r="7" fill="none" stroke="#bbb" stroke-width="2"/><path d="M2 9h5L4.5 5" fill="none" stroke="#aaa" stroke-width="1.5"/>
 <rect x="9" y="10" width="7" height="6" fill="#999"/><path d="M10.5 10V8a2 2 0 0 1 4 0v2" fill="none" stroke="#999" stroke-width="1.2"/>
</svg>
<div class="a arr" style="left:1334px;top:888px"></div>
<svg class="a" style="left:1356px;top:881px" width="15" height="15" viewBox="0 0 15 15">
 <circle cx="5.5" cy="5.5" r="4.8" fill="#dfe8f8" stroke="#3a5a9a" stroke-width="1.2"/><path d="M3 5.5h5M5.5 3v5" stroke="#1a4ab8" stroke-width="1.6"/><path d="M9 9l5 5" stroke="#5a4a2a" stroke-width="2.4"/>
</svg>
<div class="a nw" style="left:1372px;top:882px;font-size:11px">100%</div>
<div class="a arr" style="left:1410px;top:888px"></div>
<svg class="a" style="left:1426px;top:885px" width="13" height="13"><g fill="#c5c2b2"><rect x="9" y="1" width="2" height="2"/><rect x="6" y="4" width="2" height="2"/><rect x="9" y="4" width="2" height="2"/><rect x="3" y="7" width="2" height="2"/><rect x="6" y="7" width="2" height="2"/><rect x="9" y="7" width="2" height="2"/></g><g fill="#fff"><rect x="10" y="2" width="1" height="1"/></g></svg>
<div class="a" style="left:0;top:878px;width:0;height:0"></div>
</body></html>
